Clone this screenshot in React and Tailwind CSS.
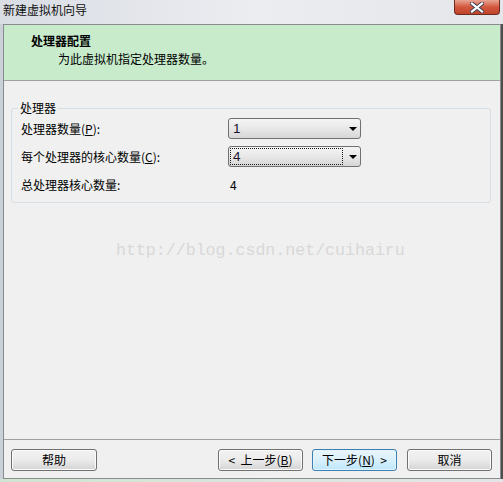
import React from 'react';

const cjk = { fontFamily: '"Noto Sans CJK SC", "Noto Sans", sans-serif' };

const Select = ({ value, focused }) => (
  <div className="relative h-[21px] w-[133px] rounded-[3px] border border-[#707070] bg-gradient-to-b from-[#f4f4f4] via-[#e8e8e8] to-[#d6d6d6] flex items-center">
    <div className={`ml-[1px] h-[17px] w-[113px] flex items-center pl-[2px] text-[13.5px] leading-none ${focused ? 'border border-dotted border-[#1a1a1a]' : 'border border-transparent'}`}>
      <span className="text-[#1c1430]" style={{ fontFamily: '"Liberation Sans", sans-serif' }}>{value}</span>
    </div>
    <svg className="absolute right-[3px] top-[8px]" width="8" height="4" viewBox="0 0 8 4">
      <path d="M0 0H8L4 4Z" fill="#000" />
    </svg>
  </div>
);

const Button = ({ children, primary, className = '' }) => (
  <button
    className={`h-[22px] w-[85px] rounded-[3px] border text-[12px] leading-none text-black flex items-center justify-center whitespace-pre ${
      primary
        ? 'border-[#3c7fb1] bg-gradient-to-b from-[#eaf6fd] via-[#d9f0fc] to-[#bee6fd] shadow-[inset_0_0_0_1px_#e3f4fc]'
        : 'border-[#707070] bg-gradient-to-b from-[#f2f2f2] via-[#ebebeb] to-[#d4d4d4] shadow-[inset_0_0_0_1px_#fbfbfb]'
    } ${className}`}
    style={cjk}
  >
    {children}
  </button>
);

export default function App() {
  return (
    <div className="w-[503px] h-[482px] flex flex-col bg-gradient-to-r from-[#d9dde4] via-[#ecedf1] to-[#e4e6ea] overflow-hidden" style={cjk}>
      {/* title bar */}
      <div className="h-[24px] flex items-start justify-between shrink-0">
        <span className="pl-[3px] pt-[2px] text-[12px] leading-[16px] text-[#111]">新建虚拟机向导</span>
        <div className="mr-[3px] w-[46px] h-[15px] rounded-b-[4px] border border-t-0 border-[#6b2a20] bg-gradient-to-b from-[#e8a493] via-[#d2573d] to-[#c0442a] flex items-center justify-center">
          <svg width="14" height="11" viewBox="0 0 14 11">
            <path d="M2 1.5L12 9.5M12 1.5L2 9.5" stroke="#3a3f55" strokeWidth="4" strokeLinecap="square" />
            <path d="M2 1.5L12 9.5M12 1.5L2 9.5" stroke="#fff" strokeWidth="2.2" strokeLinecap="square" />
          </svg>
        </div>
      </div>

      {/* frame + client */}
      <div className="flex-1 flex">
        <div className="w-[3px] bg-[#c9d0d8]" />
        <div className="flex-1 flex flex-col border border-[#8a8b8c] bg-[#f0f0f0]">
          {/* header */}
          <div className="h-[56px] shrink-0 bg-[#c7ebcb] border-b border-[#a0a0a0] pl-[27px] pt-[8px]">
            <div className="text-[12px] leading-[16px] font-bold text-black">处理器配置</div>
            <div className="mt-[2px] pl-[27px] text-[12px] leading-[16px] text-black">为此虚拟机指定处理器数量。</div>
          </div>

          {/* body */}
          <div className="flex-1 flex flex-col">
            <div className="relative mt-[27px] ml-[7px] mr-[9px] rounded-[3px] border border-[#d5dfe5] pt-[9px] pb-[7px] pl-[9px] text-[12px] text-black">
              <span className="absolute left-[6px] top-[-9px] bg-[#f0f0f0] px-[2px] leading-[16px]">处理器</span>
              <div className="grid grid-cols-[207px_133px] gap-y-[7px]">
                <div className="h-[21px] flex items-center">处理器数量(<u>P</u>):</div>
                <Select value="1" />
                <div className="h-[21px] flex items-center">每个处理器的核心数量(<u>C</u>):</div>
                <Select value="4" focused />
                <div className="h-[21px] flex items-center">总处理器核心数量:</div>
                <div className="h-[21px] flex items-center pl-[2px]">4</div>
              </div>
            </div>

            <div className="mt-[38px] pl-[112px] text-[16.6px] leading-[20px] text-[#d8d8d8]" style={{ fontFamily: '"Liberation Mono", monospace' }}>
              http://blog.csdn.net/cuihairu
            </div>
          </div>

          {/* footer */}
          <div className="shrink-0 border-t border-[#a0a0a0] pt-[9px] pb-[7px] pl-[7px] pr-[8px] flex items-center">
            <Button className="w-[86px]">帮助</Button>
            <div className="flex-1" />
            <Button>{'<  上一步('}<u>B</u>{')'}</Button>
            <Button primary className="ml-[9px]">{'下一步('}<u>N</u>{')  >'}</Button>
            <Button className="ml-[10px]">取消</Button>
          </div>
        </div>
        <div className="w-[2px] bg-[#4d4d4d]" />
      </div>
      <div className="h-[3px] shrink-0 bg-gradient-to-r from-[#cfe5d2] to-[#e2e6e8]" />
    </div>
  );
}
